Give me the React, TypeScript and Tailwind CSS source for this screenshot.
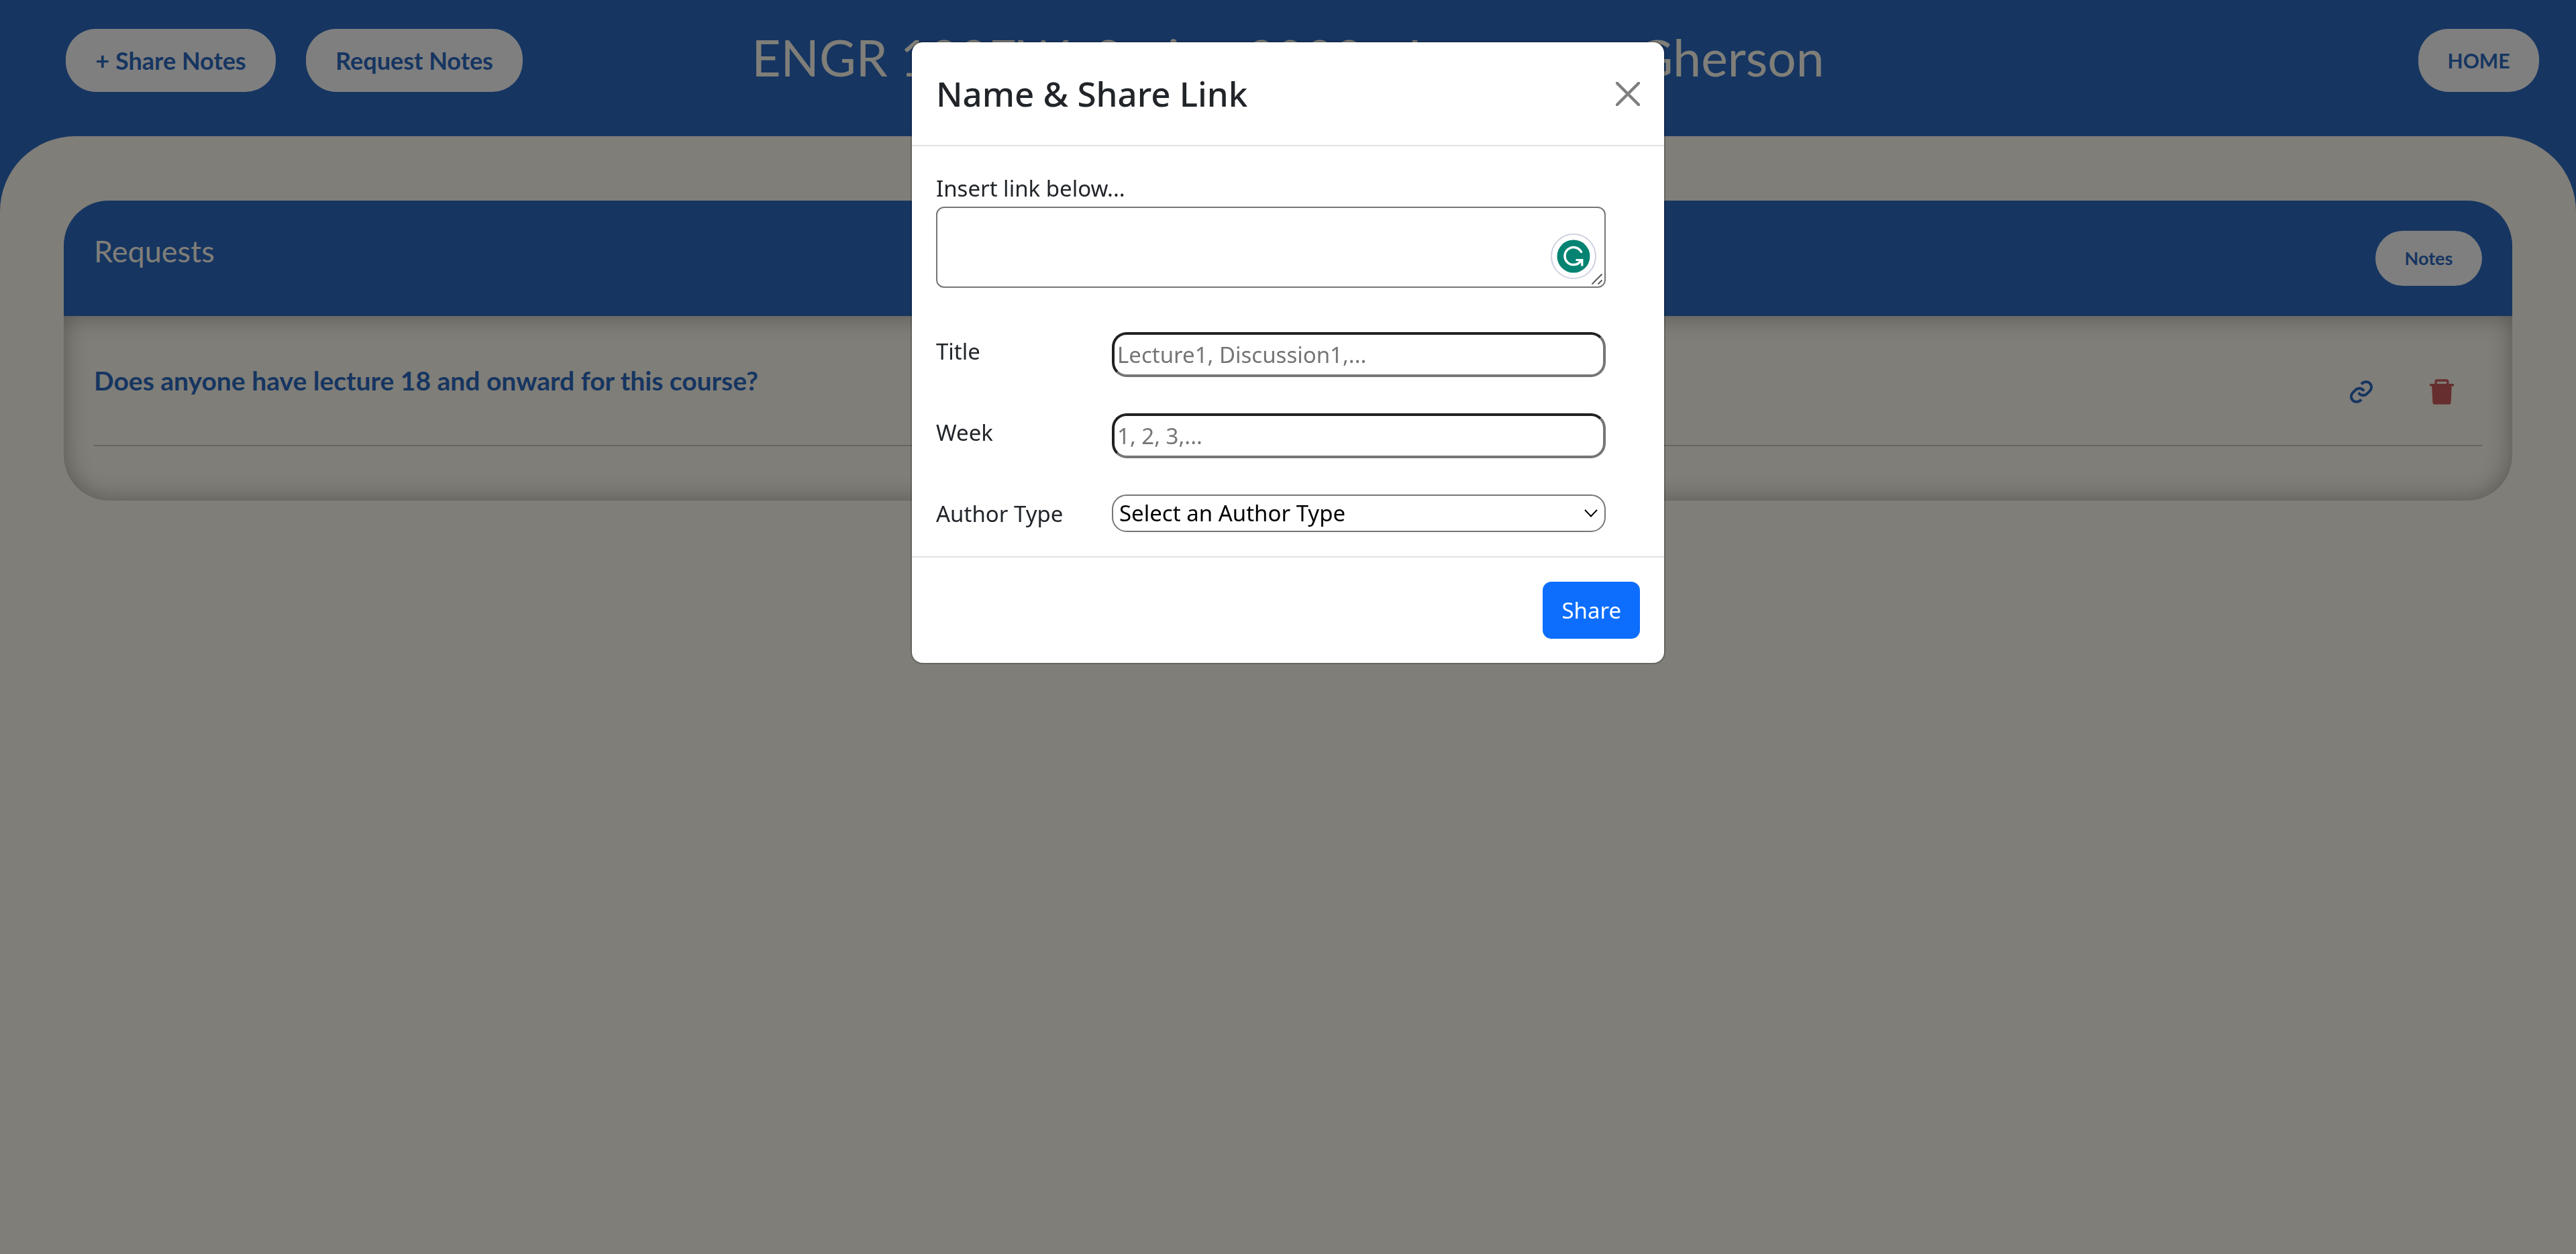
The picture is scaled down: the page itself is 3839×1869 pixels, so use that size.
import type { ButtonHTMLAttributes, ReactNode } from "react";
import { BiLink } from "react-icons/bi";
import { AiFillDelete } from "react-icons/ai";

function PillButton({ className = "", ...props }: ButtonHTMLAttributes<HTMLButtonElement>) {
  return (
    <button
      type="button"
      className={`shrink-0 rounded-[45px] bg-white text-center font-bold whitespace-nowrap text-[#2c6ac2] ${className}`}
      {...props}
    />
  );
}

function IconButton({ label, className, children }: { label: string; className: string; children: ReactNode }) {
  return (
    <button type="button" aria-label={label} className={`flex w-[120px] items-center justify-center ${className}`}>
      {children}
    </button>
  );
}

function Field({ id, label, children }: { id: string; label: string; children: ReactNode }) {
  return (
    <div className="flex items-start">
      <label htmlFor={id} className="w-[262px] shrink-0 pt-0.5">
        {label}
      </label>
      <div className="relative min-w-0 flex-1">{children}</div>
    </div>
  );
}

const inputClass =
  "block h-[67px] w-full rounded-[22px] border-4 border-t-[#212121] border-r-[#767676] border-b-[#767676] border-l-[#212121] bg-white px-1 text-black placeholder:text-[#757575]";

function AssistantBadge() {
  return (
    <svg viewBox="0 0 68 68" className="absolute right-[14px] bottom-[13px] size-[68px]" aria-hidden="true">
      <circle cx="34" cy="34" r="33" fill="#fff" stroke="#cfd2e0" strokeWidth="2" />
      <circle cx="34" cy="34" r="24.5" fill="#048372" />
      <path d="M45.5 27.500 A13 13 0 1 0 43.500 42.500 L46.500 39.500" fill="none" stroke="#fff" strokeWidth="3.500" strokeLinecap="round" />
      <path d="M37.500 39.500 H46.800 V48.500" fill="none" stroke="#fff" strokeWidth="3.200" />
    </svg>
  );
}

function ResizeGrip() {
  return (
    <svg viewBox="0 0 18 18" className="absolute right-[4px] bottom-[4px] size-[18px]" aria-hidden="true">
      <path d="M1.500 16.500 L16.500 1.500 M10.500 16.500 L16.500 10.500" stroke="#5f5f5f" strokeWidth="2.200" fill="none" />
    </svg>
  );
}

function ShareDialog() {
  return (
    <div className="fixed inset-0 flex items-start justify-center bg-black/50 pt-[61px] font-['Noto_Sans',sans-serif]">
      <div
        role="dialog"
        aria-modal="true"
        aria-labelledby="dialog-title"
        className="w-full max-w-[1125px] rounded-[18px] border-2 border-black/20 bg-white bg-clip-padding text-[33px] leading-[54px] text-[#212529]"
      >
        <div className="flex items-center justify-between border-b-2 border-[#dee2e6] p-9">
          <h2 id="dialog-title" className="text-[51px] leading-[81px] font-medium">
            Name &amp; Share Link
          </h2>
          <button type="button" aria-label="Close">
            <svg viewBox="0 0 36 36" className="size-9" aria-hidden="true">
              <path d="M2 2 L34 34 M34 2 L2 34" stroke="#7f7f7f" strokeWidth="4.500" strokeLinecap="round" />
            </svg>
          </button>
        </div>

        <form>
          <div className="p-9 pr-[87px]">
            <label htmlFor="link" className="block">
              Insert link below...
            </label>
            <div className="relative mb-[66px]">
              <textarea
                id="link"
                className="block h-[121px] w-full resize-none rounded-[12px] border-2 border-[#767676] bg-white p-1 text-black"
              />
              <AssistantBadge />
              <ResizeGrip />
            </div>
            <div className="flex flex-col gap-[54px]">
              <Field id="title" label="Title">
                <input id="title" type="text" placeholder="Lecture1, Discussion1,..." className={inputClass} />
              </Field>
              <Field id="week" label="Week">
                <input id="week" type="text" placeholder="1, 2, 3,..." className={inputClass} />
              </Field>
              <Field id="author" label="Author Type">
                <select
                  id="author"
                  className="block h-14 w-full appearance-none rounded-[22px] border-2 border-[#767676] bg-white px-[9px] leading-[52px] text-black"
                >
                  <option>Select an Author Type</option>
                </select>
                <svg viewBox="0 0 20 12" className="pointer-events-none absolute top-[22px] right-3 h-3 w-5" aria-hidden="true">
                  <path d="M1 1 L10 10.500 L19 1" fill="none" stroke="#000" strokeWidth="2" />
                </svg>
              </Field>
            </div>
          </div>
          <div className="flex justify-end border-t-2 border-[#dee2e6] p-9">
            <button type="submit" className="h-[85px] rounded-[13px] bg-[#0d6efd] px-7 text-white">
              Share
            </button>
          </div>
        </form>
      </div>
    </div>
  );
}

export default function App() {
  return (
    <div className="min-h-screen bg-[#2c6ac2] font-['Lato',sans-serif]">
      <header className="grid grid-cols-[1fr_auto_1fr] items-start pt-[43px] pb-[66px]">
        <div className="flex gap-[45px] pl-[98px] text-[36px]">
          <PillButton className="h-[94px] w-[313px]">+ Share Notes</PillButton>
          <PillButton className="h-[94px] w-[323px]">Request Notes</PillButton>
        </div>
        <h1 className="text-[75px] leading-[84px] whitespace-nowrap text-[#fffcf0]">
          ENGR 183EW: Spring 2023 - Instructor Gherson
        </h1>
        <div className="flex justify-end pr-[55px] text-[30px]">
          <PillButton className="h-[94px] w-[180px]">HOME</PillButton>
        </div>
      </header>

      <main className="min-h-[1666px] rounded-t-[112px] bg-[#fffcf0] px-[95px] pt-24">
        <section className="overflow-hidden rounded-[67px]">
          <div className="flex items-start justify-between bg-[#2c6ac2] px-[45px] py-[45px]">
            <h2 className="text-[45px] leading-[60px] text-[#fffcf0]">Requests</h2>
            <PillButton className="h-[82px] w-[159px] text-[27px]">Notes</PillButton>
          </div>
          <div className="rounded-b-[67px] px-[45px] pb-[81px] shadow-[inset_0_0_36px_rgba(0,0,0,0.32)]">
            <div className="flex items-start justify-between border-b-2 border-[#cac8be] pt-[69px] pb-[55px]">
              <p className="text-[39px] leading-[54px] font-bold text-[#2c6ac2]">
                Does anyone have lecture 18 and onward for this course?
              </p>
              <div className="flex pt-5">
                <IconButton label="Open link" className="text-[#2c6ac2]">
                  <BiLink className="size-12" />
                </IconButton>
                <IconButton label="Delete request" className="text-[#cd5c5c]">
                  <AiFillDelete className="size-12" />
                </IconButton>
              </div>
            </div>
          </div>
        </section>
      </main>

      <ShareDialog />
    </div>
  );
}
